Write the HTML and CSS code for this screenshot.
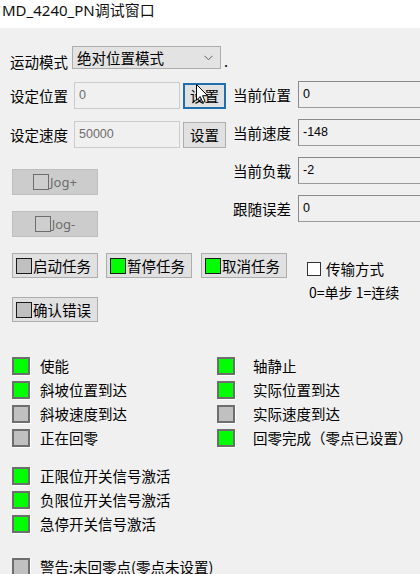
FILE: index.html
```html
<!DOCTYPE html>
<html lang="zh-CN">
<head>
<meta charset="utf-8">
<link rel="stylesheet" href="styles.css">
</head>
<body>
<div class="title">MD_4240_PN调试窗口</div>
<div class="panel">
  <div class="mode-row">
    <span class="lbl mode-lbl">运动模式</span>
    <div class="combo"><span>绝对位置模式</span><svg class="chev" width="9" height="6" viewBox="0 0 9 6"><path d="M0.5 0.8 L4.5 4.8 L8.5 0.8" fill="none" stroke="#606060" stroke-width="1"/></svg></div>
    <span class="dot">.</span>
  </div>

  <div class="top">
    <div class="left-col">
      <div class="frow">
        <span class="lbl">设定位置</span>
        <div class="tb tb-dis tb-left">0</div>
        <div class="btn-set focus">设置</div>
      </div>
      <div class="frow">
        <span class="lbl">设定速度</span>
        <div class="tb tb-dis tb-left">50000</div>
        <div class="btn-set">设置</div>
      </div>
      <div class="jog jog-first"><span class="jsq"></span>Jog+</div>
      <div class="jog jog-second"><span class="jsq"></span>Jog-</div>
    </div>
    <div class="right-col">
      <div class="frow">
        <span class="lbl">当前位置</span>
        <div class="tb tb-ro tb-right">0</div>
      </div>
      <div class="frow">
        <span class="lbl">当前速度</span>
        <div class="tb tb-ro tb-right">-148</div>
      </div>
      <div class="frow">
        <span class="lbl">当前负载</span>
        <div class="tb tb-ro tb-right">-2</div>
      </div>
      <div class="frow">
        <span class="lbl">跟随误差</span>
        <div class="tb tb-ro tb-right">0</div>
      </div>
    </div>
  </div>

  <div class="tasks">
    <div class="task-btns">
      <div class="btn-row">
        <div class="tbtn"><span class="sq"></span>启动任务</div>
        <div class="tbtn"><span class="sq on"></span>暂停任务</div>
        <div class="tbtn tbtn-third"><span class="sq on"></span>取消任务</div>
      </div>
      <div class="btn-row">
        <div class="tbtn"><span class="sq"></span>确认错误</div>
      </div>
    </div>
    <div class="transfer">
      <div class="cbrow"><span class="cb"></span><span class="cb-text">传输方式</span></div>
      <div class="note">0=单步 1=连续</div>
    </div>
  </div>

  <div class="ind-grid">
    <div class="ind"><span class="led on"></span>使能</div>
    <div class="ind r"><span class="led on"></span>轴静止</div>
    <div class="ind"><span class="led on"></span>斜坡位置到达</div>
    <div class="ind r"><span class="led on"></span>实际位置到达</div>
    <div class="ind"><span class="led"></span>斜坡速度到达</div>
    <div class="ind r"><span class="led"></span>实际速度到达</div>
    <div class="ind"><span class="led"></span>正在回零</div>
    <div class="ind r"><span class="led on"></span>回零完成（零点已设置）</div>
  </div>

  <div class="ind-list group2">
    <div class="ind"><span class="led on"></span>正限位开关信号激活</div>
    <div class="ind"><span class="led on"></span>负限位开关信号激活</div>
    <div class="ind"><span class="led on"></span>急停开关信号激活</div>
  </div>

  <div class="ind-list group3">
    <div class="ind"><span class="led"></span>警告:未回零点(零点未设置)</div>
  </div>
</div>

<svg class="cursor" width="13" height="20" viewBox="0 0 13 20"><path d="M0.5 0.5 V16.2 L4.2 12.6 L6.8 18.4 L9.1 17.4 L6.6 11.7 H11.6 Z" fill="#fff" stroke="#000" stroke-width="1" stroke-linejoin="miter"/></svg>
</body>
</html>
```

FILE: styles.css
```css
* {
  box-sizing: border-box;
  margin: 0;
  padding: 0;
}

html,
body {
  width: 420px;
  height: 574px;
  overflow: hidden;
}

body {
  position: relative;
  background: #f0f0f0;
  font-family: "Noto Sans CJK SC", "Noto Sans", sans-serif;
  font-size: 14.5px;
  color: #000;
}

.title {
  height: 28px;
  background: #fff;
  padding-left: 2px;
  font-family: "Noto Sans", "Noto Sans CJK SC", sans-serif;
  font-size: 15px;
  line-height: 20px;
  color: #111;
}

.panel {
  padding: 18px 0 0 10px;
}

.lbl {
  line-height: 20px;
  white-space: nowrap;
  flex: none;
}

/* mode row */
.mode-row {
  display: flex;
  align-items: flex-start;
  height: 23px;
}

.mode-lbl {
  margin-top: 6px;
}

.combo {
  margin-left: 4px;
  width: 149px;
  height: 23px;
  background: #e3e3e3;
  border: 1px solid #adadad;
  display: flex;
  align-items: center;
  justify-content: space-between;
  padding: 0 7px 0 4px;
  line-height: 20px;
}

.chev {
  display: block;
}

.dot {
  margin-left: 3px;
  margin-top: 5px;
  line-height: 20px;
}

/* top section */
.top {
  display: flex;
  margin-top: 13px;
}

.left-col {
  width: 223px;
  flex: none;
  display: flex;
  flex-direction: column;
}

.right-col {
  display: flex;
  flex-direction: column;
  gap: 11px;
  margin-top: -1px;
}

.frow {
  display: flex;
  align-items: center;
  height: 27px;
}

.left-col .frow + .frow {
  margin-top: 12px;
}

.tb {
  height: 27px;
  flex: none;
  font-family: "Liberation Sans", Arial, sans-serif;
  font-size: 12.5px;
  line-height: 16px;
  padding: 4px 3px 0 4px;
  background: #f0f0f0;
}

.tb-dis {
  border: 1px solid #cccccc;
  color: #6d6d6d;
}

.tb-ro {
  border: 1px solid #9b9b9b;
  border-top-color: #8a8a8a;
  border-left-color: #8a8a8a;
  color: #000;
}

.tb-left {
  margin-left: 6px;
  width: 106px;
}

.tb-right {
  margin-left: 7px;
  width: 140px;
}

.btn-set {
  margin-left: 3px;
  width: 43px;
  height: 26px;
  flex: none;
  background: #e1e1e1;
  border: 1px solid #adadad;
  display: flex;
  align-items: center;
  justify-content: center;
  font-size: 14.5px;
  line-height: 20px;
}

.btn-set.focus {
  border: 2px solid #1f6fae;
}

.jog {
  margin-left: 2px;
  width: 86px;
  height: 26px;
  background: #cccccc;
  border: 1px solid #bebebe;
  display: flex;
  align-items: center;
  justify-content: center;
  color: #6d6d6d;
  font-family: "Noto Sans", sans-serif;
  font-size: 13px;
  line-height: 18px;
}

.jog-first {
  margin-top: 21px;
}

.jog-second {
  margin-top: 16px;
}

.jsq {
  width: 16px;
  height: 16px;
  border: 1px solid #6d6d6d;
  background: #cecece;
  margin-right: 1px;
}

/* tasks */
.tasks {
  display: flex;
  margin-top: 16px;
}

.task-btns {
  margin-left: 2px;
  display: flex;
  flex-direction: column;
  gap: 19px;
}

.btn-row {
  display: flex;
  gap: 8px;
}

.tbtn {
  width: 86px;
  height: 25px;
  background: #e1e1e1;
  border: 1px solid #adadad;
  display: flex;
  align-items: center;
  padding-left: 3px;
  font-size: 14.5px;
  line-height: 20px;
  white-space: nowrap;
}

.tbtn-third {
  margin-left: 1px;
}

.sq {
  width: 16px;
  height: 16px;
  flex: none;
  border: 1px solid #1a1a1a;
  background: #c0c0c0;
  margin-right: 1px;
}

.sq.on {
  background: #00ff00;
}

.transfer {
  margin-left: 20px;
  padding-top: 9px;
}

.cbrow {
  display: flex;
  align-items: center;
  height: 14px;
}

.cb {
  width: 14px;
  height: 14px;
  flex: none;
  background: #fff;
  border: 1px solid #333;
}

.cb-text {
  margin-left: 5px;
  line-height: 20px;
  white-space: nowrap;
}

.note {
  margin-top: 7px;
  margin-left: 2px;
  font-size: 14px;
  line-height: 18px;
  white-space: nowrap;
}

/* indicators */
.ind-grid {
  display: grid;
  grid-template-columns: 205px 1fr;
  margin-top: 32px;
  margin-left: 2px;
}

.ind-list {
  display: flex;
  flex-direction: column;
  margin-left: 2px;
}

.group2 {
  margin-top: 14px;
}

.group3 {
  margin-top: 19px;
}

.ind {
  display: flex;
  align-items: center;
  height: 24px;
  line-height: 20px;
  white-space: nowrap;
}

.led {
  width: 18px;
  height: 18px;
  flex: none;
  background: #c0c0c0;
  border: 2px solid #6e6e6e;
  box-shadow: 1px 1px 0 #ffffff;
  margin-right: 10px;
}

.led.on {
  background: #00ff00;
}

.ind.r .led {
  margin-right: 18px;
}

/* mouse cursor overlay */
.cursor {
  position: absolute;
  left: 196px;
  top: 84px;
}
```
